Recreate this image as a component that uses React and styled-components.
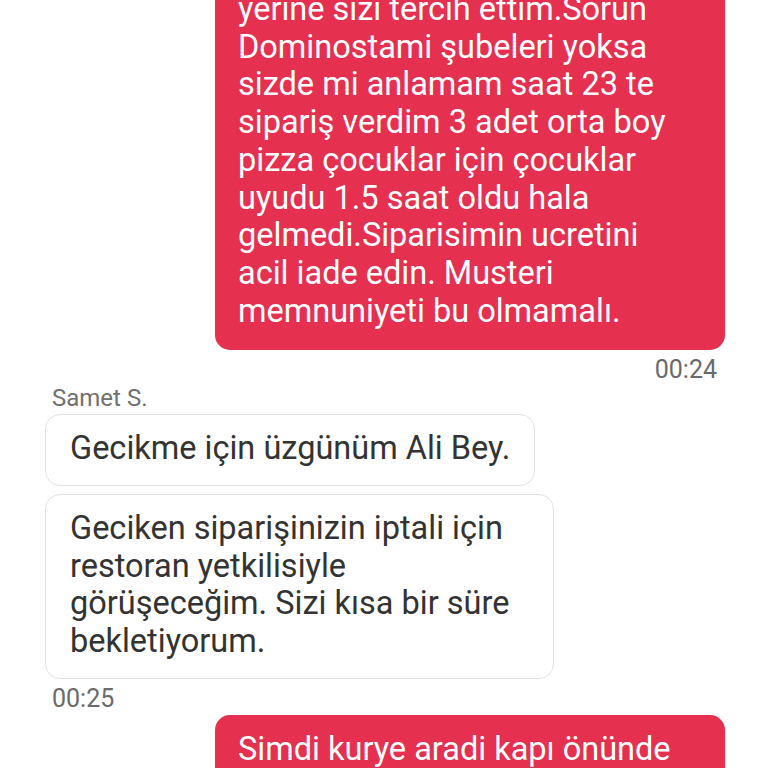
import React from 'react'
import styled, { createGlobalStyle } from 'styled-components'

const GlobalStyle = createGlobalStyle`
  html, body {
    margin: 0;
    padding: 0;
    background: #ffffff;
    overflow: hidden;
  }
  body {
    font-family: Roboto, "Noto Sans", "Liberation Sans", sans-serif;
  }
`

const Thread = styled.div`
  display: flex;
  flex-direction: column;
  width: 768px;
  height: 768px;
  overflow: hidden;
`

const Scroller = styled.div`
  display: flex;
  flex-direction: column;
  margin-top: -25px;
`

const Bubble = styled.div`
  box-sizing: border-box;
  font-size: 32.5px;
  line-height: 37.7px;
  border-radius: 15px;
  ${p => p.mine ? `
    align-self: flex-end;
    width: 510px;
    margin-right: 43px;
    background: #e5304f;
    color: #ffffff;
    padding: 16px 23px 20px 23px;
  ` : `
    align-self: flex-start;
    margin-left: 45px;
    background: #ffffff;
    color: #333333;
    border: 1px solid #e2e2e2;
    padding: 15px 24px 17px 24px;
  `}
  ${p => p.wrapped && !p.mine ? 'width: 509px;' : ''}
  & + & {
    margin-top: 8px;
  }
`

const Line = styled.span`
  display: block;
  white-space: nowrap;
`

const Stamp = styled.div`
  font-size: 25px;
  line-height: 28px;
  color: #6a6a6a;
  margin-top: 6px;
  ${p => p.mine ? `
    align-self: flex-end;
    margin-right: 51px;
  ` : `
    align-self: flex-start;
    margin-left: 52px;
    margin-bottom: 2px;
  `}
`

const Sender = styled.div`
  align-self: flex-start;
  margin-left: 52px;
  margin-top: 1px;
  margin-bottom: 3px;
  font-size: 24px;
  line-height: 26px;
  color: #707070;
`

const Message = ({ mine, lines }) => (
  <Bubble mine={mine} wrapped={lines.length > 1}>
    {lines.map((l, i) => <Line key={i}>{l}</Line>)}
  </Bubble>
)

export default function App() {
  return (
    <>
      <GlobalStyle />
      <Thread>
        <Scroller>
          <Message mine lines={[
            'yerine sizi tercih ettim.Sorun',
            'Dominostami şubeleri yoksa',
            'sizde mi anlamam saat 23 te',
            'sipariş verdim 3 adet orta boy',
            'pizza çocuklar için çocuklar',
            'uyudu 1.5 saat oldu hala',
            'gelmedi.Siparisimin ucretini',
            'acil iade edin. Musteri',
            'memnuniyeti bu olmamalı.',
          ]} />
          <Stamp mine>00:24</Stamp>

          <Sender>Samet S.</Sender>
          <Message lines={['Gecikme için üzgünüm Ali Bey.']} />
          <Message lines={[
            'Geciken siparişinizin iptali için',
            'restoran yetkilisiyle',
            'görüşeceğim. Sizi kısa bir süre',
            'bekletiyorum.',
          ]} />
          <Stamp>00:25</Stamp>

          <Message mine lines={[
            'Simdi kurye aradi kapı önünde',
            've pizzalar soğuk gelmiş.',
          ]} />
        </Scroller>
      </Thread>
    </>
  )
}
